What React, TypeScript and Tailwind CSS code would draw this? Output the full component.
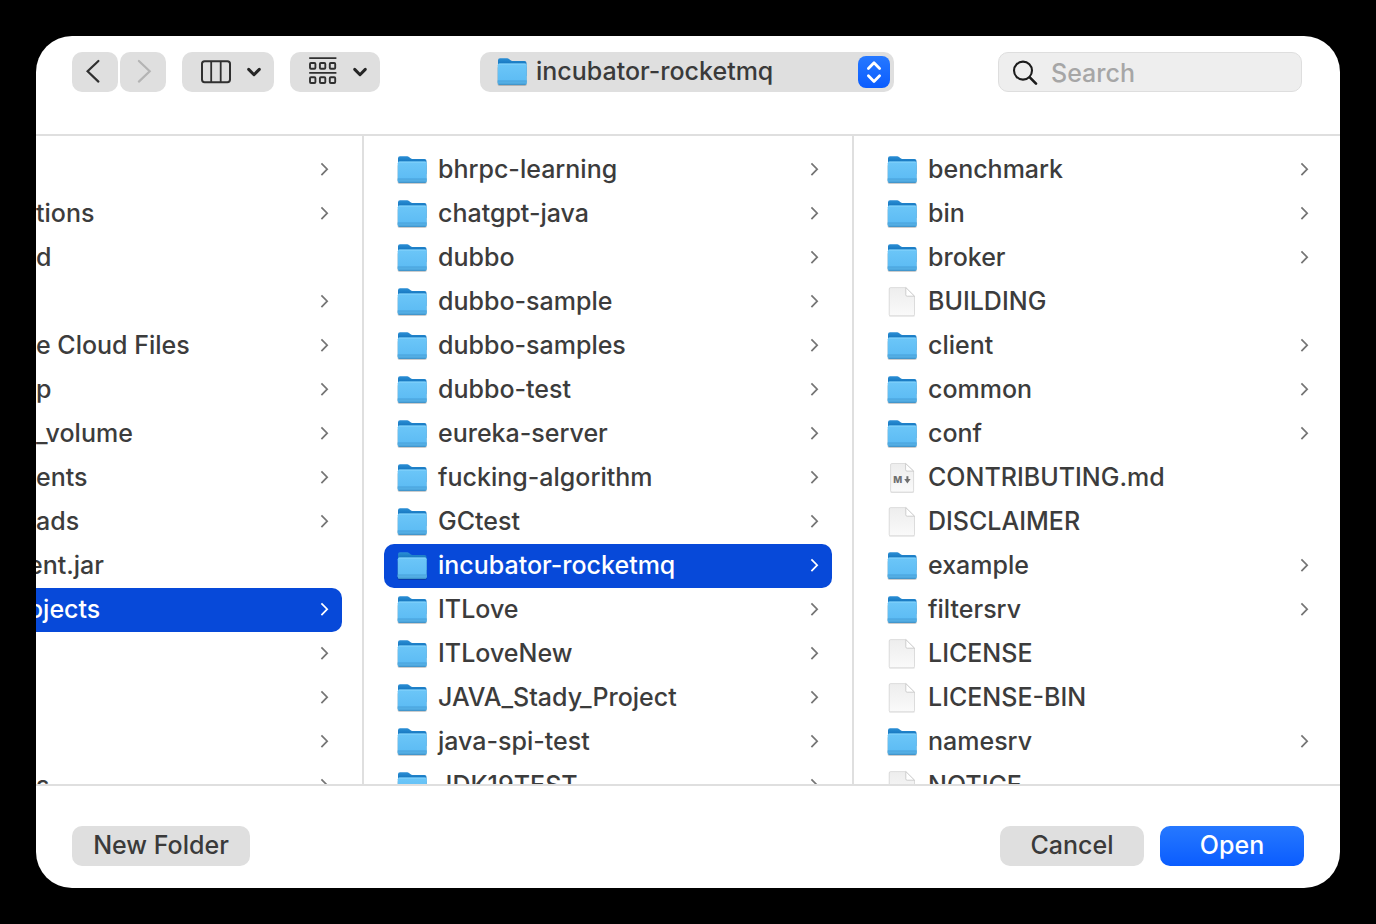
import React, { useState } from 'react';
import clsx from 'clsx';

type Kind = 'folder' | 'file' | 'markdown';

interface Entry {
  name: string;
  kind?: Kind;
  // Name scrolled half a letter past the window edge
  cut?: boolean;
  leaf?: boolean;
}

const homeEntries: Entry[] = [
  { name: '' },
  { name: 'tions' },
  { name: 'd', leaf: true },
  { name: '' },
  { name: 'e Cloud Files' },
  { name: 'p' },
  { name: '_volume' },
  { name: 'ents' },
  { name: 'ads' },
  { name: 'ent.jar', leaf: true, cut: true },
  { name: 'ojects', cut: true },
  { name: '' },
  { name: '' },
  { name: '' },
  { name: 's' },
];

const projectEntries: Entry[] = [
  'bhrpc-learning',
  'chatgpt-java',
  'dubbo',
  'dubbo-sample',
  'dubbo-samples',
  'dubbo-test',
  'eureka-server',
  'fucking-algorithm',
  'GCtest',
  'incubator-rocketmq',
  'ITLove',
  'ITLoveNew',
  'JAVA_Stady_Project',
  'java-spi-test',
  'JDK19TEST',
].map((name) => ({ name, kind: 'folder' }));

const rocketmqEntries: Entry[] = [
  { name: 'benchmark', kind: 'folder' },
  { name: 'bin', kind: 'folder' },
  { name: 'broker', kind: 'folder' },
  { name: 'BUILDING', kind: 'file', leaf: true },
  { name: 'client', kind: 'folder' },
  { name: 'common', kind: 'folder' },
  { name: 'conf', kind: 'folder' },
  { name: 'CONTRIBUTING.md', kind: 'markdown', leaf: true },
  { name: 'DISCLAIMER', kind: 'file', leaf: true },
  { name: 'example', kind: 'folder' },
  { name: 'filtersrv', kind: 'folder' },
  { name: 'LICENSE', kind: 'file', leaf: true },
  { name: 'LICENSE-BIN', kind: 'file', leaf: true },
  { name: 'namesrv', kind: 'folder' },
  { name: 'NOTICE', kind: 'file', leaf: true },
];

// Gradients shared by every file and folder icon
function IconDefs() {
  return (
    <svg className="absolute size-0" aria-hidden="true">
      <defs>
        <linearGradient id="folder-back" x1="0" y1="0" x2="0" y2="1">
          <stop offset="0" stopColor="#2b8fd6" />
          <stop offset="0.25" stopColor="#1b7cc4" />
          <stop offset="1" stopColor="#2f90d2" />
        </linearGradient>
        <linearGradient id="folder-front" x1="0" y1="0" x2="0" y2="1">
          <stop offset="0" stopColor="#6cc6f8" />
          <stop offset="1" stopColor="#5abaf3" />
        </linearGradient>
        <linearGradient id="page" x1="0" y1="0" x2="0" y2="1">
          <stop offset="0" stopColor="#ededed" />
          <stop offset="1" stopColor="#fafafa" />
        </linearGradient>
      </defs>
    </svg>
  );
}

function FolderIcon({ className }: { className?: string }) {
  return (
    <svg viewBox="0 0 32 32" className={clsx('size-8 shrink-0', className)} aria-hidden="true">
      <rect x="1.5" y="10" width="29.4" height="20" rx="2" fill="#000" opacity="0.2" />
      <path
        d="M2 4.2Q2 2.2 4 2.2h7.2q1 0 1.8.7l1.6 1.4q.8.7 1.8.7h12.1q2 0 2 2V20H2z"
        fill="url(#folder-back)"
      />
      <path d="M1.7 9.3Q1.7 7.4 3.6 7.4h25.2q1.9 0 1.9 1.9v17.5q0 2-2 2H3.7q-2 0-2-2z" fill="url(#folder-front)" />
      <path d="M2.6 8.1h27.2" stroke="#8bd8fd" strokeWidth="0.8" />
      <path d="M1.7 25h29v1.8q0 2-2 2H3.7q-2 0-2-2z" fill="#53aee4" />
      <path d="M1.7 24.8h29" stroke="#47a2dc" strokeWidth="0.8" />
      <path d="M2.6 28.3h27.2" stroke="#3a8cc2" strokeWidth="0.9" />
    </svg>
  );
}

function FileIcon() {
  return (
    <svg viewBox="0 0 32 32" className="size-8 shrink-0" aria-hidden="true">
      <path d="M3.2 2h16.6l8.8 8.4v20H3.2z" fill="#000" opacity="0.12" />
      <path
        d="M4.6 1.6h15.2l8.7 8.6v18.2q0 1.4-1.4 1.4H4.6q-1.4 0-1.4-1.4V3q0-1.4 1.4-1.4z"
        fill="url(#page)"
        stroke="#d3d3d3"
        strokeWidth="0.7"
      />
      <path d="M19.8 1.6v7.2q0 1.4 1.4 1.4h7.3z" fill="#fff" stroke="#c4c4c4" strokeWidth="0.8" />
    </svg>
  );
}

function MarkdownIcon() {
  return (
    <svg viewBox="0 0 32 32" className="size-8 shrink-0" aria-hidden="true">
      <path d="M4.6 2h15l8.2 8v20.7H4.6z" fill="#000" opacity="0.12" />
      <path
        d="M5.9 1.5h13.7l8 7.6v19.6q0 1.4-1.4 1.4H5.9q-1.3 0-1.3-1.4V2.9q0-1.4 1.3-1.4z"
        fill="url(#page)"
        stroke="#d3d3d3"
        strokeWidth="0.7"
      />
      <path d="M19.6 1.5v6.2q0 1.4 1.4 1.4h6.6z" fill="#fff" stroke="#c4c4c4" strokeWidth="0.8" />
      <text x="7.2" y="21" fontSize="9.5" fontWeight="800" fontFamily="Inter, sans-serif" fill="#6f6f6f">
        M
      </text>
      <path d="M21.4 14.2v4" stroke="#6f6f6f" strokeWidth="2" />
      <path d="M18.2 17h6.4l-3.2 4.4z" fill="#6f6f6f" />
    </svg>
  );
}

function EntryIcon({ kind }: { kind: Kind }) {
  if (kind === 'folder') return <FolderIcon />;
  if (kind === 'markdown') return <MarkdownIcon />;
  return <FileIcon />;
}

function RowChevron() {
  return (
    <svg viewBox="0 0 12 16" className="h-4 w-3" fill="none" aria-hidden="true">
      <path d="M3.4 1.3l5.8 5.9-5.8 5.9" stroke="currentColor" strokeWidth="1.7" />
    </svg>
  );
}

function MenuChevron() {
  return (
    <svg viewBox="0 0 16 12" className="h-3 w-4" fill="none" aria-hidden="true">
      <path
        d="M2.7 3.4L8 8.7l5.3-5.3"
        stroke="#262626"
        strokeWidth="3"
        strokeLinecap="round"
        strokeLinejoin="round"
      />
    </svg>
  );
}

interface ColumnProps {
  label: string;
  entries: Entry[];
  selected?: string;
  onSelect: (name: string) => void;
  className: string;
  rowClassName: string;
}

function Column({ label, entries, selected, onSelect, className, rowClassName }: ColumnProps) {
  return (
    <ul aria-label={label} className={clsx('min-w-0 overflow-hidden pt-3', className)}>
      {entries.map((entry, index) => {
        const active = entry.name !== '' && entry.name === selected;
        return (
          <li key={index}>
            <button
              type="button"
              onClick={() => onSelect(entry.name)}
              className={clsx(
                'flex h-11 w-full items-center gap-2.5 pr-3 text-left',
                rowClassName,
                active ? 'bg-[#0749d9] text-white' : 'text-[#3c3c3c]'
              )}
            >
              {entry.kind && <EntryIcon kind={entry.kind} />}
              <span className={clsx('pb-0.5 whitespace-nowrap', entry.cut && '-ml-2')}>{entry.name}</span>
              {!entry.leaf && (
                <span className={clsx('ml-auto shrink-0', active ? 'text-white' : 'text-[#757575]')}>
                  <RowChevron />
                </span>
              )}
            </button>
          </li>
        );
      })}
    </ul>
  );
}

export default function App() {
  const [home, setHome] = useState('ojects');
  const [project, setProject] = useState('incubator-rocketmq');
  const [file, setFile] = useState('');
  const [query, setQuery] = useState('');

  return (
    <div className="h-screen bg-black p-9 font-['Inter',sans-serif] text-[25px] leading-8 font-medium">
      <IconDefs />
      <main className="flex h-full flex-col overflow-hidden rounded-[36px] bg-white text-[#3a3a3a]">
        {/* Toolbar */}
        <header className="flex h-25 shrink-0 items-start border-b-2 border-[#dfdfdf] pt-4 pr-9.5 pl-9">
          <div className="flex flex-1 gap-4">
            <div className="flex gap-0.5">
              <button
                type="button"
                aria-label="Back"
                className="flex h-10 w-11.5 items-center justify-center rounded-[10px] bg-[#dfdfdf]"
              >
                <svg viewBox="0 0 28 28" className="size-7" fill="none" aria-hidden="true">
                  <path d="M17.4 3L6.6 13.3l10.8 10.3" stroke="#303030" strokeWidth="2.2" strokeLinecap="round" />
                </svg>
              </button>
              <button
                type="button"
                aria-label="Forward"
                className="flex h-10 w-11.5 items-center justify-center rounded-[10px] bg-[#dfdfdf]"
              >
                <svg viewBox="0 0 28 28" className="size-7" fill="none" aria-hidden="true">
                  <path d="M9.9 3l10.8 10.3L9.9 23.6" stroke="#b4b4b4" strokeWidth="2.2" strokeLinecap="round" />
                </svg>
              </button>
            </div>
            <button
              type="button"
              aria-label="View as columns"
              className="flex h-10 items-center gap-3.5 rounded-[10px] bg-[#dfdfdf] pr-3 pl-4.5"
            >
              <svg viewBox="0 0 32 24" className="h-6 w-8" fill="none" stroke="#303030" aria-hidden="true">
                <rect x="2" y="1.2" width="28" height="21" rx="2.6" strokeWidth="2" />
                <path d="M11.2 1.2v21M20.7 1.2v21" strokeWidth="1.8" />
              </svg>
              <MenuChevron />
            </button>
            <button
              type="button"
              aria-label="Group items"
              className="flex h-10 items-center gap-3.5 rounded-[10px] bg-[#dfdfdf] pr-3 pl-4"
            >
              <svg viewBox="0 0 32 32" className="size-8" fill="none" stroke="#303030" aria-hidden="true">
                <path d="M3.2 2.2h27.2M3.2 16.8h27.2" strokeWidth="1.8" />
                <g strokeWidth="1.9">
                  <rect x="4" y="7" width="5.4" height="5.8" rx="1" />
                  <rect x="13.9" y="7" width="5.4" height="5.8" rx="1" />
                  <rect x="23.8" y="7" width="5.4" height="5.8" rx="1" />
                  <rect x="4" y="21.2" width="5.4" height="5.8" rx="1" />
                  <rect x="13.9" y="21.2" width="5.4" height="5.8" rx="1" />
                  <rect x="23.8" y="21.2" width="5.4" height="5.8" rx="1" />
                </g>
              </svg>
              <MenuChevron />
            </button>
          </div>

          <div className="relative w-[414px]">
            <select
              aria-label="Location"
              defaultValue="incubator-rocketmq"
              className="h-10 w-full appearance-none rounded-[10px] bg-[#dfdfdf] pr-10 pb-0.5 pl-14"
            >
              <option>incubator-rocketmq</option>
            </select>
            <FolderIcon className="pointer-events-none absolute top-1 left-4" />
            <span className="pointer-events-none absolute top-1 right-1 size-8 rounded-lg bg-linear-to-b from-[#2678ff] to-[#0a5cff]">
              <svg viewBox="0 0 32 32" className="size-8" fill="none" aria-hidden="true">
                <path
                  d="M10.4 12.4l5.6-5.6 5.6 5.6M10.4 19.8l5.6 5.6 5.6-5.6"
                  stroke="#fff"
                  strokeWidth="2.8"
                  strokeLinecap="round"
                  strokeLinejoin="round"
                />
              </svg>
            </span>
          </div>

          <div className="flex flex-1 justify-end">
            <label className="relative w-[304px]">
              <svg
                viewBox="0 0 32 32"
                className="pointer-events-none absolute top-1 left-3 size-8"
                fill="none"
                stroke="#1c1c1c"
                aria-hidden="true"
              >
                <circle cx="13" cy="14.6" r="9" strokeWidth="2.1" />
                <path d="M19.8 21.4l6.2 6.2" strokeWidth="2.7" strokeLinecap="round" />
              </svg>
              <input
                type="text"
                aria-label="Search"
                placeholder="Search"
                value={query}
                onChange={(e) => setQuery(e.target.value)}
                className="h-10 w-full rounded-[10px] border border-[#dedede] bg-[#eeeeee] pt-0.5 pr-3 pl-13 placeholder:text-[#a6a6a6]"
              />
            </label>
          </div>
        </header>

        {/* Column browser */}
        <div className="grid min-h-0 flex-1 grid-cols-[328fr_490fr_486fr]">
          <Column
            label="Home"
            entries={homeEntries}
            selected={home}
            onSelect={setHome}
            className="border-r-2 border-[#dfdfdf] pr-5"
            rowClassName="rounded-r-[10px]"
          />
          <Column
            label="Projects"
            entries={projectEntries}
            selected={project}
            onSelect={setProject}
            className="border-r-2 border-[#dfdfdf] px-5"
            rowClassName="rounded-[10px] pl-3"
          />
          <Column
            label="incubator-rocketmq"
            entries={rocketmqEntries}
            selected={file}
            onSelect={setFile}
            className="pr-4.5 pl-5"
            rowClassName="rounded-[10px] pl-3"
          />
        </div>

        {/* Actions */}
        <footer className="flex shrink-0 gap-4 border-t-2 border-[#dfdfdf] px-9 pt-10 pb-5.5">
          <button type="button" className="mr-auto h-10 w-[178px] rounded-[10px] bg-[#dfdfdf] pb-0.5">
            New Folder
          </button>
          <button type="button" className="h-10 w-36 rounded-[10px] bg-[#dfdfdf] pb-0.5">
            Cancel
          </button>
          <button
            type="button"
            className="h-10 w-36 rounded-[10px] bg-linear-to-b from-[#2678ff] to-[#0a5cff] pb-0.5 text-white"
          >
            Open
          </button>
        </footer>
      </main>
    </div>
  );
}
